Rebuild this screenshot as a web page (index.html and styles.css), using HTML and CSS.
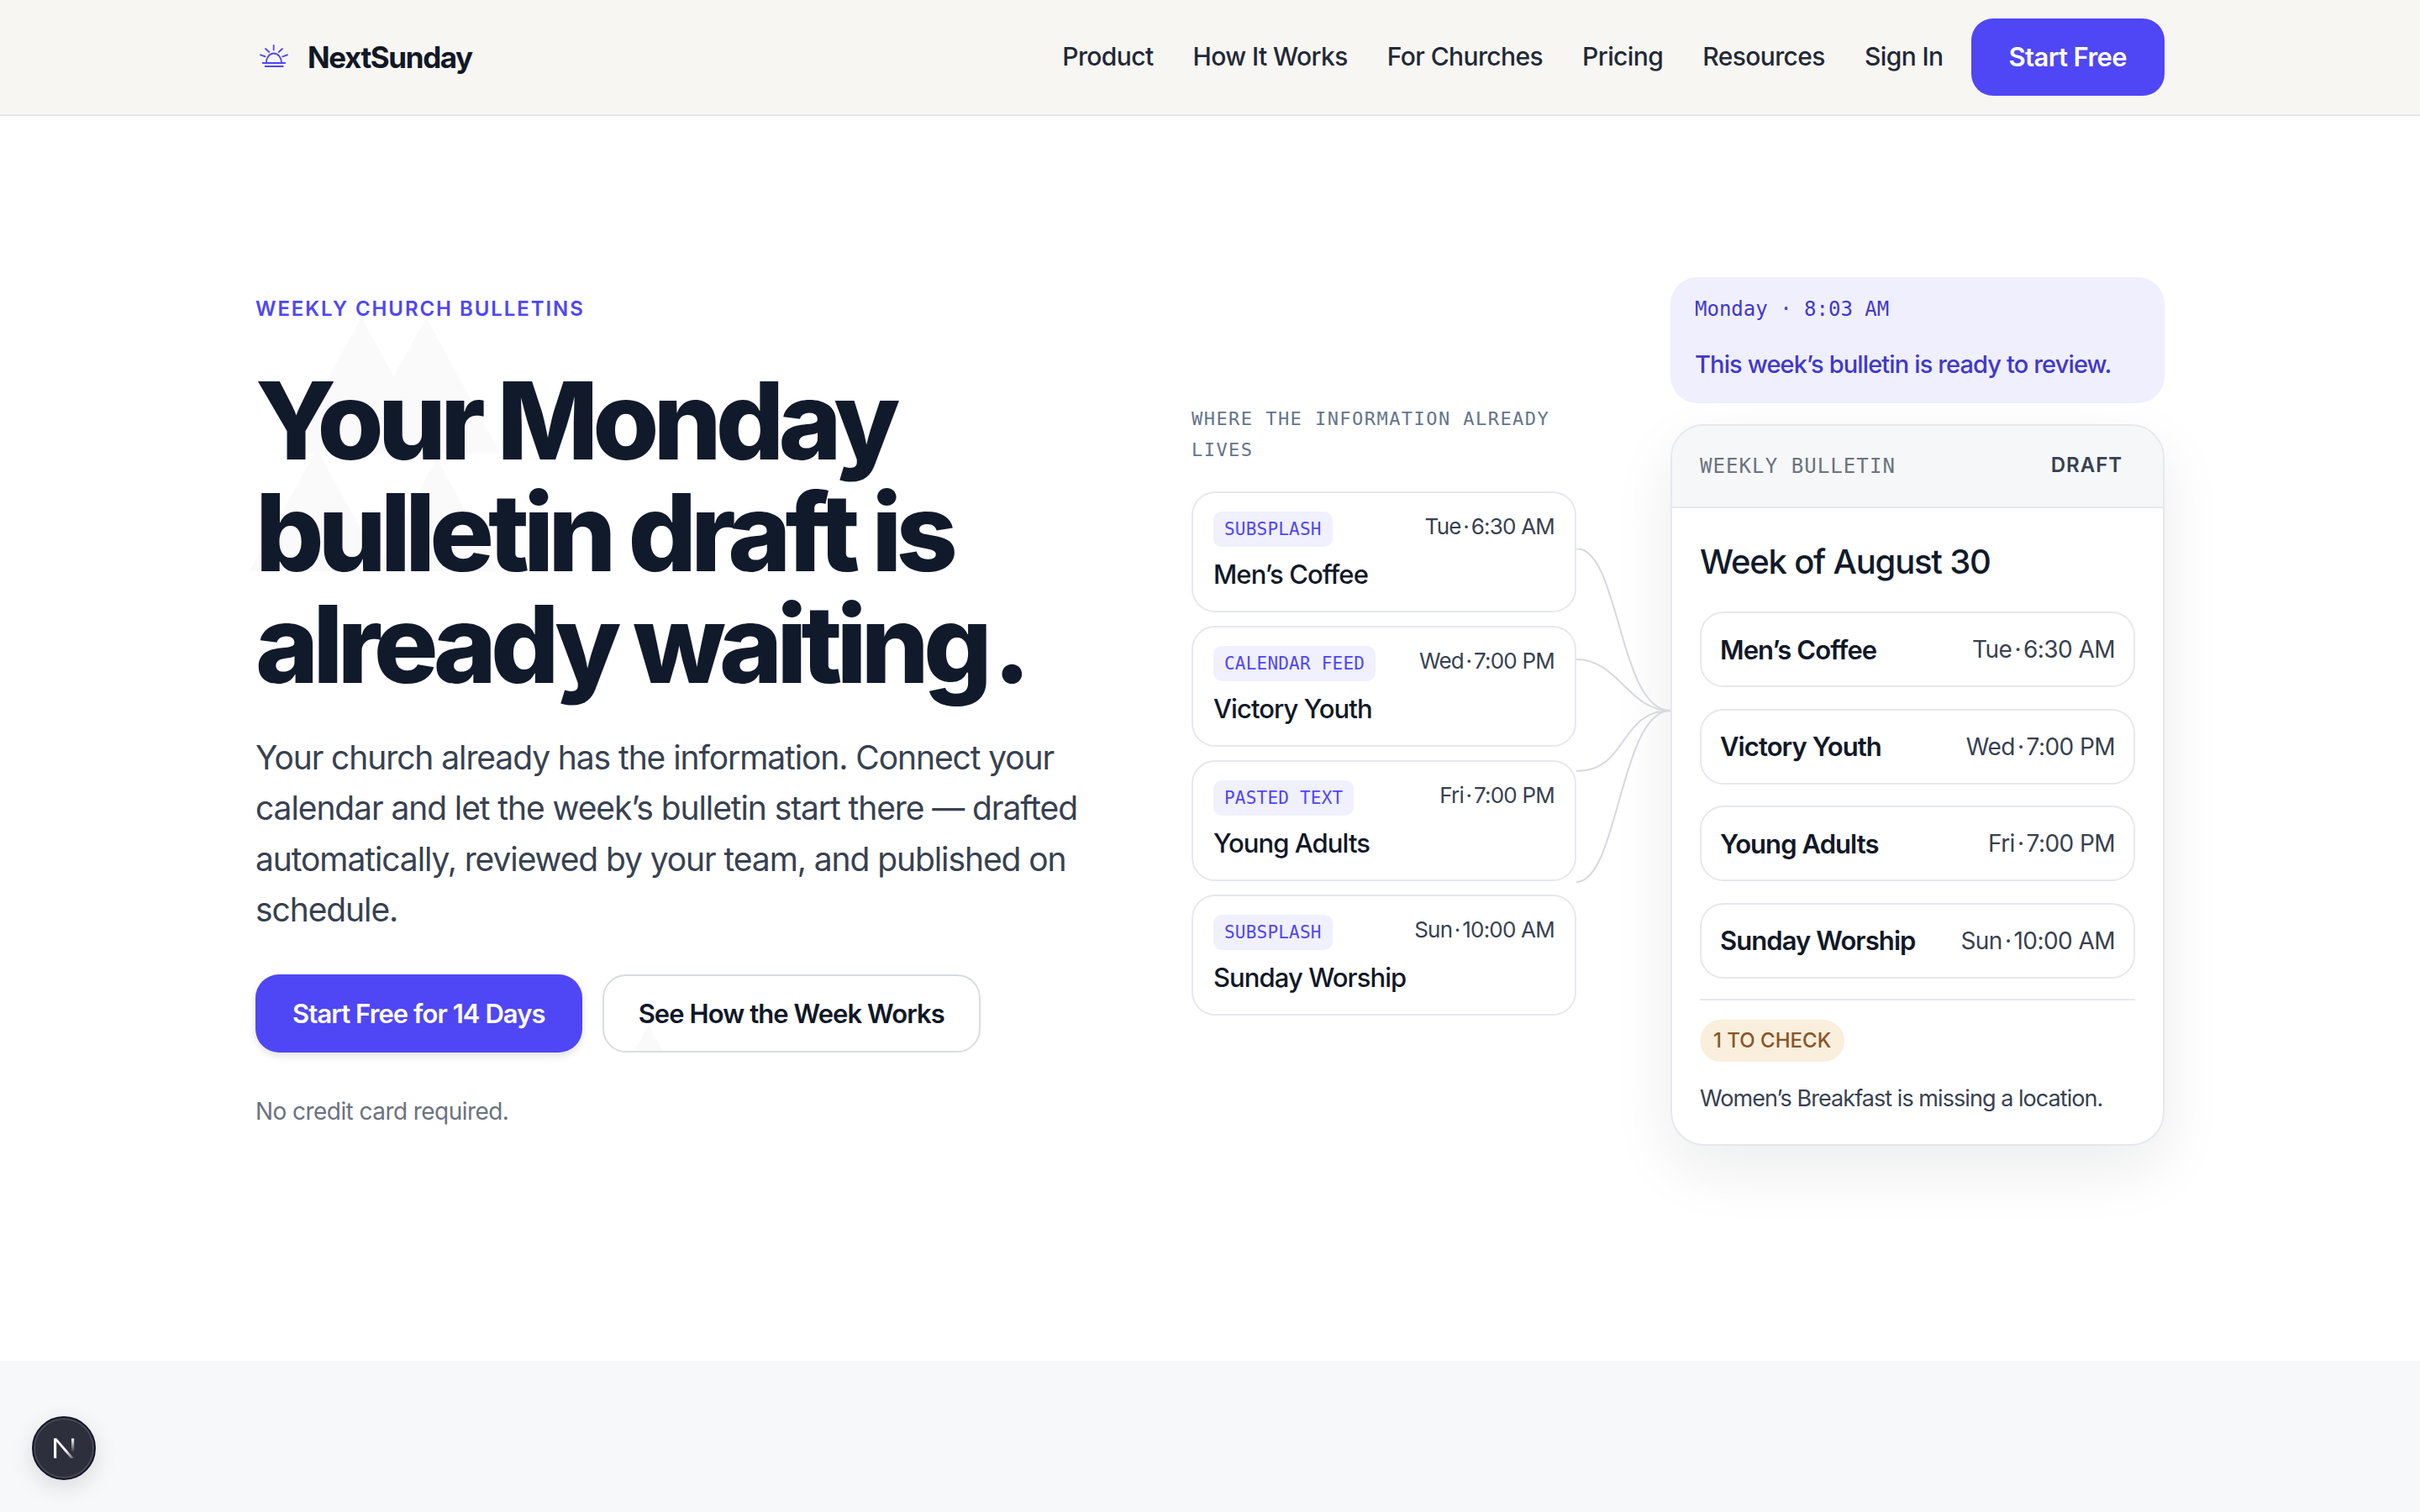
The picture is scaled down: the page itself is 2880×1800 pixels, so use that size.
FILE: index.html
```html
<!DOCTYPE html>
<html lang="en">
  <head>
    <meta charset="UTF-8" />
    <meta name="viewport" content="width=device-width, initial-scale=1.0" />
    <title>NextSunday</title>
    <link rel="stylesheet" href="styles.css">
  </head>
  <body>
    <!-- Faint shapes behind the hero -->
    <svg class="backdrop" viewBox="0 0 2880 1620" aria-hidden="true">
      <polygon points="430,378 519,540 341,540" />
      <polygon points="507,378 596,540 418,540" />
      <polygon points="377,535 457,680 297,680" />
      <polygon points="520,545 592,680 448,680" />
      <polygon points="772,1220 790,1253 754,1253" />
      <polygon points="2060,1125 2082,1163 2038,1163" />
    </svg>

    <header class="site-header">
      <a class="brand" href="#">
        <svg class="brand-icon" viewBox="0 0 36 36">
          <path d="M17.7 4v5.5M8 8l4.3 4M28 8l-4.3 4M2 15.3l5.7 2M34 15.3l-5.7 2" />
          <path d="M8.7 25a9.2 11.5 0 0 1 18.4 0" />
          <path d="M4.7 25h26.6M7.7 29h21" />
        </svg>
        <span>NextSunday</span>
      </a>
      <nav class="site-nav">
        <a href="#">Product</a>
        <a href="#">How It Works</a>
        <a href="#">For Churches</a>
        <a href="#">Pricing</a>
        <a href="#">Resources</a>
        <a href="#">Sign In</a>
        <a class="nav-cta" href="#">Start Free</a>
      </nav>
    </header>

    <main class="hero">
      <section class="hero-copy">
        <p class="eyebrow">WEEKLY CHURCH BULLETINS</p>
        <h1>Your Monday bulletin draft is already waiting<span class="dot">.</span></h1>
        <p class="lead">Your church already has the information. Connect your calendar and let the week’s bulletin start there — drafted automatically, reviewed by your team, and published on schedule.</p>
        <div class="hero-actions">
          <a class="btn btn-primary" href="#">Start Free for 14 Days</a>
          <a class="btn btn-outline" href="#">See How the Week Works</a>
        </div>
        <p class="fine-print">No credit card required.</p>
      </section>

      <section class="sources">
        <p class="sources-label">WHERE THE INFORMATION ALREADY LIVES</p>
        <div class="source-list">
          <article class="source-card">
            <div class="source-top">
              <span class="source-tag">SUBSPLASH</span>
              <span class="source-time">Tue<span class="sep"> · </span>6:30 AM</span>
            </div>
            <div class="source-name">Men’s Coffee</div>
          </article>
          <article class="source-card">
            <div class="source-top">
              <span class="source-tag">CALENDAR FEED</span>
              <span class="source-time">Wed<span class="sep"> · </span>7:00 PM</span>
            </div>
            <div class="source-name">Victory Youth</div>
          </article>
          <article class="source-card">
            <div class="source-top">
              <span class="source-tag">PASTED TEXT</span>
              <span class="source-time">Fri<span class="sep"> · </span>7:00 PM</span>
            </div>
            <div class="source-name">Young Adults</div>
          </article>
          <article class="source-card">
            <div class="source-top">
              <span class="source-tag">SUBSPLASH</span>
              <span class="source-time">Sun<span class="sep"> · </span>10:00 AM</span>
            </div>
            <div class="source-name">Sunday Worship</div>
          </article>
          <!-- Lines from the source cards to the bulletin -->
          <svg class="connectors" viewBox="0 0 112 420" aria-hidden="true">
            <path d="M0 0C52 0 50 193 112 193" />
            <path d="M0 132C50 132 62 193 112 193" />
            <path d="M0 265C62 265 50 193 112 193" />
            <path d="M0 397C50 397 52 193 112 193" />
          </svg>
        </div>
      </section>

      <section class="preview">
        <div class="notice">
          <div class="notice-time">Monday · 8:03 AM</div>
          <div class="notice-text">This week’s bulletin is ready to review.</div>
        </div>
        <div class="bulletin">
          <div class="bulletin-head">
            <span class="bulletin-label">WEEKLY BULLETIN</span>
            <span class="bulletin-status">DRAFT</span>
          </div>
          <div class="bulletin-body">
            <h2>Week of August 30</h2>
            <div class="event-list">
              <div class="event-row"><strong>Men’s Coffee</strong><span>Tue<span class="sep"> · </span>6:30 AM</span></div>
              <div class="event-row"><strong>Victory Youth</strong><span>Wed<span class="sep"> · </span>7:00 PM</span></div>
              <div class="event-row"><strong>Young Adults</strong><span>Fri<span class="sep"> · </span>7:00 PM</span></div>
              <div class="event-row"><strong>Sunday Worship</strong><span>Sun<span class="sep"> · </span>10:00 AM</span></div>
            </div>
            <div class="check-block">
              <span class="check-pill">1 TO CHECK</span>
              <p>Women’s Breakfast is missing a location.</p>
            </div>
          </div>
        </div>
      </section>
    </main>

    <section class="next-section"></section>

    <button class="dev-badge" aria-label="Open Next.js Dev Tools">
      <svg viewBox="0 0 36 36">
        <defs>
          <linearGradient id="fadeBar" x1="0" y1="0" x2="0" y2="1">
            <stop offset="0%" stop-color="#fff" />
            <stop offset="100%" stop-color="#fff" stop-opacity="0" />
          </linearGradient>
          <linearGradient id="fadeLeg" x1="0" y1="0" x2="1" y2="1">
            <stop offset="60%" stop-color="#fff" />
            <stop offset="100%" stop-color="#fff" stop-opacity="0.2" />
          </linearGradient>
        </defs>
        <path d="M6 6.500h3.200v23.500H6z" fill="#fff" />
        <path d="M6 6.500h3.500L30 30h-4z" fill="url(#fadeLeg)" />
        <path d="M27 6.500h3.200V23H27z" fill="url(#fadeBar)" />
      </svg>
    </button>
  </body>
</html>
```

FILE: styles.css
```css
* {
  margin: 0;
  padding: 0;
  box-sizing: border-box;
}

body {
  font-family: Inter, "Liberation Sans", sans-serif;
  background: #fff;
  color: #111827;
  position: relative;
  overflow: hidden;
  height: 1800px;
}

a {
  color: inherit;
  text-decoration: none;
}

.backdrop {
  position: absolute;
  top: 0;
  left: 0;
  width: 2880px;
  height: 1620px;
  fill: #fafafa;
  pointer-events: none;
}

/* Header */
.site-header {
  position: relative;
  height: 138px;
  padding: 0 304px;
  display: flex;
  justify-content: space-between;
  align-items: center;
  background: #f8f6f2;
  border-bottom: 2px solid #e5e7eb;
}

.brand {
  display: flex;
  align-items: center;
  gap: 22px;
  font-size: 35px;
  font-weight: 700;
  letter-spacing: -0.04em;
  margin-left: 4px;
}

.brand-icon {
  width: 36px;
  height: 36px;
  fill: none;
  stroke: #4f46f6;
  stroke-width: 1.8;
  stroke-linecap: round;
}

.site-nav {
  display: flex;
  align-items: center;
  gap: 47px;
  font-size: 30px;
  font-weight: 500;
  letter-spacing: -0.02em;
  color: #1f2937;
}

.site-nav a:not(.nav-cta) {
  margin-bottom: 3px;
}

.nav-cta {
  margin-left: -14px;
  padding: 0 45px 2px;
  height: 92px;
  display: flex;
  align-items: center;
  border-radius: 26px;
  background: #4f46f6;
  color: #fff;
  font-weight: 600;
  font-size: 31px;
}

/* Hero */
.hero {
  position: relative;
  padding: 192px 304px 256px;
  display: grid;
  grid-template-columns: 1fr 458px 588px;
  column-gap: 112px;
  align-items: center;
}

.hero-copy {
  padding-bottom: 2px;
}

.eyebrow {
  font-size: 24px;
  font-weight: 600;
  letter-spacing: 0.08em;
  color: #4f46f6;
  margin-bottom: 52px;
}

h1 {
  font-size: 128px;
  line-height: 133px;
  font-weight: 800;
  letter-spacing: -0.055em;
  color: #111a2b;
  margin-bottom: 39px;
  max-width: 960px;
}

.dot {
  margin-left: 8px;
}

.lead {
  font-size: 39px;
  line-height: 60.5px;
  letter-spacing: -0.028em;
  color: #374151;
  max-width: 1000px;
}

.hero-actions {
  display: flex;
  gap: 24px;
  margin-top: 46px;
}

.btn {
  height: 93px;
  display: flex;
  align-items: center;
  border-radius: 28px;
  font-size: 31px;
  font-weight: 600;
  letter-spacing: -0.03em;
}

.btn-primary {
  padding: 0 44px;
  background: #4f46f6;
  color: #fff;
  box-shadow: 0 4px 10px rgba(17, 24, 39, 0.12);
}

.btn-outline {
  padding: 0 41px;
  border: 2px solid #d9dce2;
  color: #111827;
}

.fine-print {
  margin-top: 53px;
  font-size: 28px;
  letter-spacing: -0.02em;
  color: #6b7280;
}

/* Source cards */
.sources {
  padding-bottom: 5px;
}

.sources-label {
  font-family: "DejaVu Sans Mono", monospace;
  font-size: 22px;
  line-height: 37px;
  letter-spacing: 0.066em;
  color: #64748b;
  margin-bottom: 31px;
}

.source-list {
  position: relative;
  display: flex;
  flex-direction: column;
  gap: 16px;
}

.source-card {
  height: 144px;
  padding: 22px 24px;
  background: #fff;
  border: 2px solid #e7e8ee;
  border-radius: 28px;
}

.source-top {
  display: flex;
  justify-content: space-between;
  align-items: flex-start;
}

.source-tag {
  height: 42px;
  padding: 0 13px;
  display: flex;
  align-items: center;
  border-radius: 10px;
  background: #f0f0fe;
  color: #4f46f6;
  font-family: "DejaVu Sans Mono", monospace;
  font-size: 21px;
  letter-spacing: 0.01em;
}

.source-time {
  margin-top: 2px;
  font-size: 26px;
  letter-spacing: -0.03em;
  color: #374151;
}

.sep {
  word-spacing: -0.15em;
}

.source-name {
  margin-top: 14px;
  font-size: 31px;
  font-weight: 500;
  letter-spacing: -0.03em;
  color: #111827;
}

.connectors {
  position: absolute;
  top: 68px;
  left: 100%;
  width: 112px;
  height: 420px;
  fill: none;
  stroke: #d6d8de;
  stroke-width: 2;
}

/* Bulletin preview */
.notice {
  height: 150px;
  padding: 24px 29px;
  border-radius: 32px;
  background: #f0effd;
  color: #3f38cc;
}

.notice-time {
  font-family: "DejaVu Sans Mono", monospace;
  font-size: 24px;
  margin-bottom: 34px;
}

.notice-text {
  font-size: 29px;
  font-weight: 500;
  letter-spacing: -0.03em;
}

.bulletin {
  margin-top: 25px;
  height: 859px;
  background: #fff;
  border: 2px solid #e7e8ee;
  border-radius: 40px;
  box-shadow: 0 28px 72px rgba(17, 24, 39, 0.08);
  overflow: hidden;
}

.bulletin-head {
  height: 98px;
  padding: 0 48px 0 33px;
  display: flex;
  justify-content: space-between;
  align-items: center;
  background: #f6f7f9;
  border-bottom: 2px solid #e7e8ee;
}

.bulletin-label {
  font-family: "DejaVu Sans Mono", monospace;
  font-size: 24px;
  letter-spacing: 0.045em;
  color: #6b7280;
}

.bulletin-status {
  margin-bottom: 4px;
  font-size: 24px;
  font-weight: 600;
  letter-spacing: 0.04em;
  color: #374151;
}

.bulletin-body {
  padding: 39px 33px 0;
}

.bulletin-body h2 {
  font-size: 40px;
  font-weight: 500;
  letter-spacing: -0.03em;
  color: #111a2b;
}

.event-list {
  margin-top: 35px;
  display: flex;
  flex-direction: column;
  gap: 25.6px;
}

.event-row {
  height: 90px;
  padding: 0 22px;
  display: flex;
  justify-content: space-between;
  align-items: center;
  border: 2px solid #e7e8ee;
  border-radius: 28px;
}

.event-row strong {
  font-size: 31px;
  font-weight: 600;
  letter-spacing: -0.03em;
  color: #111827;
}

.event-row span {
  font-size: 28px;
  letter-spacing: -0.02em;
  color: #374151;
}

.check-block {
  margin-top: 24px;
  padding-top: 23px;
  border-top: 2px solid #e7e8ee;
}

.check-pill {
  display: inline-flex;
  align-items: center;
  height: 50px;
  padding: 0 16px;
  border-radius: 25px;
  background: #f9efdc;
  color: #8a5428;
  font-size: 24px;
  font-weight: 500;
}

.check-block p {
  margin-top: 27px;
  font-size: 27px;
  letter-spacing: -0.035em;
  color: #374151;
}

.next-section {
  height: 180px;
  background: #f7f8fa;
}

.dev-badge {
  position: absolute;
  left: 38px;
  top: 1686px;
  width: 76px;
  height: 76px;
  display: flex;
  align-items: center;
  justify-content: center;
  border-radius: 50%;
  border: 2px solid #111827;
  background: #2e2f3d;
  box-shadow: 0 8px 28px rgba(0, 0, 0, 0.12), inset 0 0 0 2px rgba(255, 255, 255, 0.12);
}

.dev-badge svg {
  width: 36px;
  height: 36px;
}
```
